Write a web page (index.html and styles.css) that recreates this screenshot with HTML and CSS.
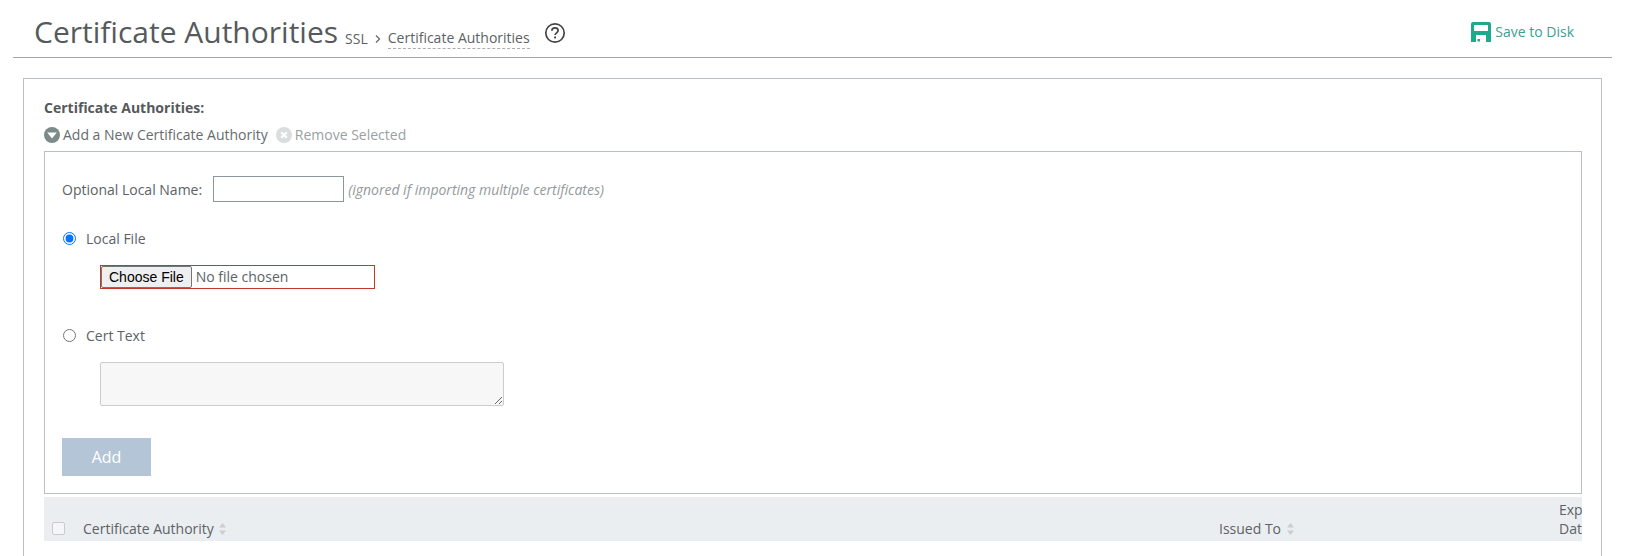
FILE: index.html
```html
<!DOCTYPE html>
<html lang="en">
<head>
<meta charset="utf-8">
<title>Certificate Authorities</title>
<link rel="stylesheet" href="styles.css">
</head>
<body>
<header class="page-head">
  <h1 class="title">Certificate Authorities</h1>
  <nav class="crumbs">
    <span>SSL</span>
    <svg class="crumb-sep" viewBox="0 0 8 10" aria-hidden="true"><path d="M2 1.5 5.5 5 2 8.5" fill="none" stroke="#666" stroke-width="1.2"/></svg>
    <span class="crumb-current">Certificate Authorities</span>
  </nav>
  <svg class="help" viewBox="0 0 22 22" aria-hidden="true">
    <circle cx="11" cy="11" r="9.2" fill="none" stroke="#444" stroke-width="1.7"/>
    <path d="M7.9 8.8c0-1.8 1.3-2.9 3.1-2.9s3.1 1.1 3.1 2.6c0 2.3-3 2.4-3 4.6" fill="none" stroke="#444" stroke-width="1.7"/>
    <rect x="10.1" y="14.5" width="1.9" height="1.9" fill="#444"/>
  </svg>
  <a class="save" href="#">
    <svg class="save-icon" viewBox="0 0 20 20" aria-hidden="true">
      <path fill-rule="evenodd" d="M2 0h16a2 2 0 0 1 2 2v18h-5v-7H5v7H0V2a2 2 0 0 1 2-2ZM3 3v6h14V3Z" fill="#1fa98c"/>
      <rect x="6.5" y="17" width="2.5" height="2.5" fill="#1fa98c"/>
    </svg>
    <span>Save to Disk</span>
  </a>
</header>

<main class="panel">
  <h2 class="section-title">Certificate Authorities:</h2>
  <div class="actions">
    <a class="action" href="#">
      <svg class="action-icon" viewBox="0 0 16 16" aria-hidden="true"><circle cx="8" cy="8" r="8" fill="#7c8a8a"/><path d="M3.2 5.6h9.6L8 11.6Z" fill="#fff"/></svg>
      <span>Add a New Certificate Authority</span>
    </a>
    <a class="action action-off" href="#">
      <svg class="action-icon" viewBox="0 0 16 16" aria-hidden="true"><circle cx="8" cy="8" r="8" fill="#dadddf"/><path d="M5.2 5.2l5.6 5.6M10.8 5.2l-5.6 5.6" stroke="#fff" stroke-width="2.2"/></svg>
      <span>Remove Selected</span>
    </a>
  </div>

  <form class="add-box">
    <div class="name-row">
      <label for="local-name">Optional Local Name:</label>
      <input id="local-name" class="name-input" type="text">
      <em class="hint">(ignored if importing multiple certificates)</em>
    </div>

    <label class="radio-row radio-file">
      <input type="radio" name="source" checked>
      <span>Local File</span>
    </label>
    <div class="file-box"><input class="file" type="file"></div>

    <label class="radio-row radio-text">
      <input type="radio" name="source">
      <span>Cert Text</span>
    </label>
    <textarea class="cert-text"></textarea>

    <button class="add-btn" type="button">Add</button>
  </form>

  <div class="table-head">
    <span class="check"></span>
    <div class="col col-name">Certificate Authority
      <svg class="sort" viewBox="0 0 7 12" aria-hidden="true"><path d="M3.5 0 7 4.6H0Z" fill="#c9ced2"/><path d="M3.5 12 7 7.4H0Z" fill="#c9ced2"/></svg>
    </div>
    <div class="col col-issued">Issued To
      <svg class="sort" viewBox="0 0 7 12" aria-hidden="true"><path d="M3.5 0 7 4.6H0Z" fill="#c9ced2"/><path d="M3.5 12 7 7.4H0Z" fill="#c9ced2"/></svg>
    </div>
    <div class="col col-exp">Expiration Date</div>
  </div>
</main>
</body>
</html>
```
FILE: styles.css
```css
* { box-sizing: border-box; }
html, body { margin: 0; height: 556px; overflow: hidden; background: #fff; }
body { font-family: "Open Sans", sans-serif; font-size: 14px; color: #5c6266; }

.page-head {
  display: flex;
  align-items: flex-start;
  height: 58px;
  margin: 0 13px 0 13px;
  border-bottom: 1px solid #a2a6a6;
  padding-left: 21px;
}
.title {
  margin: 11px 0 0;
  font-size: 30px;
  line-height: 41px;
  font-weight: 400;
  color: #555a5c;
}
.crumbs {
  display: flex;
  align-items: center;
  margin: 28px 0 0 7px;
  line-height: 20px;
  color: #5c6266;
}
.crumb-sep { width: 8px; height: 10px; margin: 1px 6px 0 6px; }
.crumb-current { border-bottom: 1px dashed #a9adb0; }
.help { width: 22px; height: 22px; margin: 22px 0 0 14px; }
.save {
  display: flex;
  align-items: flex-start;
  margin: 22px 38px 0 auto;
  color: #3f9d90;
  text-decoration: none;
  line-height: 20px;
}
.save-icon { width: 20px; height: 20px; margin-right: 4px; }

.panel {
  margin: 20px 23px 0 23px;
  height: 560px;
  border: 1px solid #b9c0c6;
  padding: 20px 19px 0 20px;
}
.section-title {
  margin: 0;
  font-size: 14px;
  line-height: 18px;
  font-weight: 700;
  color: #55595c;
}
.actions { display: flex; gap: 8px; margin-top: 9px; height: 25px; }
.action { display: flex; gap: 3px; height: 18px; line-height: 18px; color: #666b6e; text-decoration: none; }
.action-off { color: #9a9fa2; }
.action-icon { width: 16px; height: 16px; margin-top: 1px; }

.add-box {
  height: 343px;
  border: 1px solid #b9bfc3;
  padding: 24px 17px 0;
}
.name-row { display: flex; align-items: center; height: 26px; }
.name-input {
  width: 131px;
  height: 26px;
  margin: 0 4px 0 11px;
  border: 1px solid #8b979c;
  background: #fff;
  padding: 0;
}
.hint { color: #94999c; }

.radio-row { display: flex; align-items: center; height: 18px; }
.radio-row input { width: 13px; height: 13px; margin: 0 10px 0 1px; accent-color: #0075ff; }
.radio-file { margin-top: 27px; }
.radio-text { margin-top: 37px; }

.file-box {
  width: 275px;
  height: 24px;
  margin: 18px 0 0 38px;
  border: 1px solid #c0392b;
}
.file {
  display: block;
  width: 100%;
  height: 22px;
  font: 14px/22px "Open Sans", sans-serif;
  color: #5c6266;
}
.file::file-selector-button {
  height: 22px;
  margin-right: 4px;
  padding: 0 7px;
  font: 14px "Liberation Sans", Arial, sans-serif;
  color: #000;
  background: #efefef;
  border: 1px solid #767676;
  border-radius: 2px;
}
.cert-text {
  display: block;
  width: 404px;
  height: 44px;
  margin: 18px 0 0 38px;
  border: 1px solid #ccc;
  border-radius: 2px;
  background: #f7f7f7;
}
.add-btn {
  display: block;
  width: 89px;
  height: 38px;
  margin-top: 32px;
  border: 0;
  padding: 0;
  background: #b3c5d6;
  color: #fff;
  font: 16px "Open Sans", sans-serif;
}

.table-head {
  display: flex;
  align-items: flex-end;
  height: 44px;
  margin-top: 3px;
  padding: 0 0 3px 8px;
  background: #ebeef0;
  overflow: hidden;
  line-height: 19px;
  color: #5c6266;
}
.check {
  flex: none;
  width: 13px;
  height: 13px;
  margin: 0 18px 3px 0;
  border: 1px solid #c8cccf;
  border-radius: 2px;
  background: #f5f6f7;
}
.col { flex: none; }
.col-name { width: 1136px; }
.col-issued { width: 340px; }
.col-exp { width: 40px; }
.sort { width: 7px; height: 12px; margin-left: 2px; vertical-align: -1px; }
```
